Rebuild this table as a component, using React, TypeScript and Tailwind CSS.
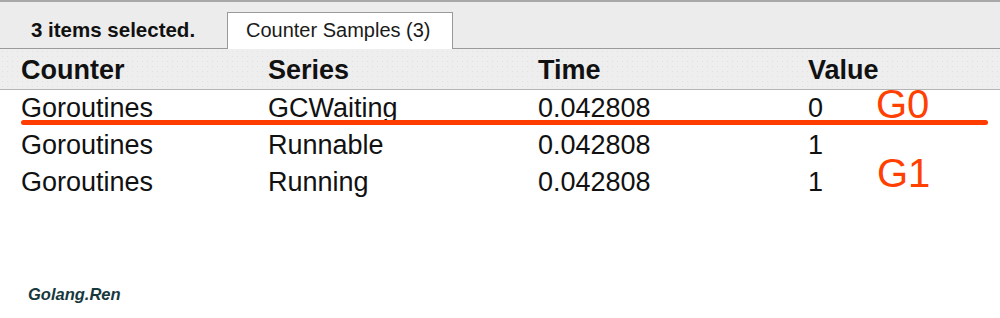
const rows = [
  { counter: "Goroutines", series: "GCWaiting", time: "0.042808", value: "0" },
  { counter: "Goroutines", series: "Runnable", time: "0.042808", value: "1" },
  { counter: "Goroutines", series: "Running", time: "0.042808", value: "1" },
];

const cols = "grid grid-cols-[247px_270px_270px_1fr] pl-[21px]";

export default function App() {
  return (
    <div className="relative h-[318px] w-[1000px] overflow-hidden bg-white font-['Liberation_Sans',Arial,sans-serif] text-[#111]">
      {/* tab strip */}
      <div className="flex h-[49px] items-end border-t-2 border-b border-t-[#a8a8a8] border-b-[#9a9a9a] bg-[#ececec]">
        <div className="mb-[7px] ml-[31px] w-[196px] text-[20.5px] font-bold leading-[23px]">3 items selected.</div>
        <div className="-mb-px h-[37px] w-[226px] border border-b-0 border-[#9a9a9a] bg-white pl-[18px] pt-[6px] text-[20px] leading-[23px] text-[#1a1a1a]">
          Counter Samples (3)
        </div>
      </div>

      {/* header */}
      <div className={`${cols} h-[41px] border-b border-[#b4b4b4] bg-[#eeeeee] bg-[radial-gradient(#e2e2e2_0.6px,transparent_0.6px)] bg-[length:5px_5px] pt-px text-[27px] font-bold leading-[40px]`}>
        <div>Counter</div>
        <div>Series</div>
        <div>Time</div>
        <div>Value</div>
      </div>

      {/* rows */}
      <div className="text-[27px] leading-[37px]">
        {rows.map((r, i) => (
          <div key={i} className={cols}>
            <div>{r.counter}</div>
            <div>{r.series}</div>
            <div>{r.time}</div>
            <div>{r.value}</div>
          </div>
        ))}
      </div>

      {/* annotations */}
      <div className="absolute left-[21px] top-[120px] h-[5px] w-[967px] rounded-full bg-[#ff3d00]" />
      <div className="absolute left-[876px] top-[84px] text-[40px] leading-[40px] text-[#ff4000]">G0</div>
      <div className="absolute left-[877px] top-[153px] text-[40px] leading-[40px] text-[#ff4000]">G1</div>

      <div className="absolute left-[28px] top-[285px] text-[16.5px] font-bold italic leading-[18px] text-[#17383d]">
        Golang.Ren
      </div>
    </div>
  );
}
